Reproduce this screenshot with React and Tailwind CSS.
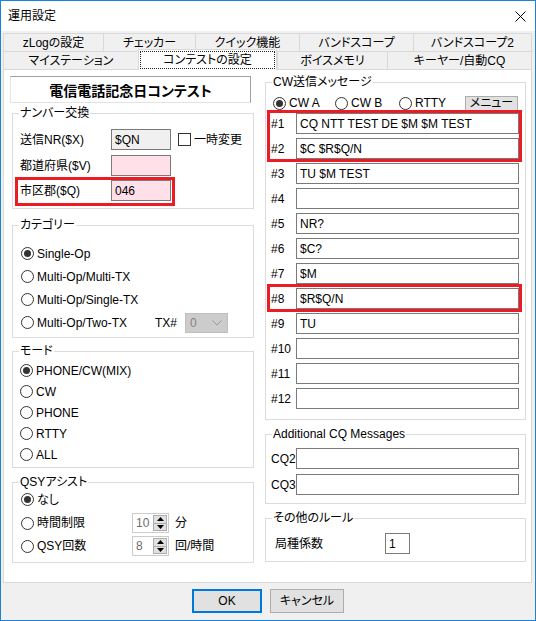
import React from 'react';

const topTabs = [
  { label: 'zLogの設定', w: 'w-[100px]' },
  { label: 'チェッカー', w: 'w-[92px]' },
  { label: 'クイック機能', w: 'w-[104px]' },
  { label: 'バンドスコープ', w: 'w-[114px]' },
  { label: 'バンドスコープ2', w: 'w-[119px]' },
];

const bottomTabs = [
  { label: 'マイステーション', w: 'w-[135px]' },
  { label: 'コンテストの設定', w: 'w-[139px]', active: true },
  { label: 'ボイスメモリ', w: 'w-[110px]' },
  { label: 'キーヤー/自動CQ', w: 'w-[145px]' },
];

const cwMessages = [
  'CQ NTT TEST DE $M $M TEST',
  '$C $R$Q/N',
  'TU $M TEST',
  '',
  'NR?',
  '$C?',
  '$M',
  '$R$Q/N',
  'TU',
  '',
  '',
  '',
];

// red highlight frame drawn over a block of rows
const Highlight = ({ className }) => (
  <div className={`absolute border-[3px] border-[#ec1c24] pointer-events-none ${className}`} />
);

const Radio = ({ checked }) => (
  <span className="w-[13px] h-[13px] shrink-0 rounded-full border border-[#333] bg-white flex items-center justify-center">
    {checked && <span className="w-[7px] h-[7px] rounded-full bg-[#333]" />}
  </span>
);

const Edit = ({ value, className = '', bg = 'bg-white' }) => (
  <div className={`h-[21px] border border-[#7a7a7a] ${bg} flex items-center pl-[3px] whitespace-pre ${className}`}>
    {value}
  </div>
);

const Group = ({ title, className = '', children }) => (
  <fieldset className={`border border-[#dcdcdc] ${className}`}>
    <legend className="ml-[6px] px-[1px] leading-[14px]">{title}</legend>
    {children}
  </fieldset>
);

const Spin = ({ value }) => (
  <div className="w-[37px] h-[20px] border border-[#cccccc] bg-white flex items-center">
    <span className="flex-1 pl-[3px] text-[#6d6d6d]">{value}</span>
    <div className="w-[15px] h-full flex flex-col py-[1px] pr-[1px]">
      <div className="flex-1 bg-[#e1e1e1] border border-[#adadad] flex items-center justify-center">
        <svg width="7" height="4" viewBox="0 0 7 4"><path d="M0 4 L3.5 0 L7 4 Z" fill="#000" /></svg>
      </div>
      <div className="flex-1 bg-[#e1e1e1] border border-[#adadad] border-t-0 flex items-center justify-center">
        <svg width="7" height="4" viewBox="0 0 7 4"><path d="M0 0 L3.5 4 L7 0 Z" fill="#000" /></svg>
      </div>
    </div>
  </div>
);

const MessageRow = ({ n, text }) => (
  <div className="h-[21px] flex items-center pl-[5px]">
    <span className="w-[25px]">#{n}</span>
    <Edit value={text} className="w-[223px]" />
  </div>
);

export default function App() {
  return (
    <div className="w-[536px] h-[621px] bg-[#f0f0f0] border border-[#1883d7] flex flex-col text-[12px] leading-[14px] text-black font-['Liberation_Sans','Noto_Sans_CJK_JP',sans-serif] [font-feature-settings:'palt']">
      {/* Title bar */}
      <div className="h-[30px] bg-white flex items-center justify-between pl-[7px] pr-[9px] shrink-0">
        <span className="text-[12px]">運用設定</span>
        <svg width="11" height="11" viewBox="0 0 11 11">
          <path d="M0.5 0.5 L10.5 10.5 M10.5 0.5 L0.5 10.5" stroke="#000" strokeWidth="1" />
        </svg>
      </div>

      {/* Tabs */}
      <div className="pt-[2px] px-[2px]">
        <div className="flex h-[18px]">
          {topTabs.map((t, i) => (
            <div
              key={t.label}
              className={`${t.w} border-t border-l border-[#d9d9d9] ${i === topTabs.length - 1 ? 'border-r' : ''} flex items-center justify-center`}
            >
              {t.label}
            </div>
          ))}
        </div>
        <div className="flex items-start h-[18px] border-t border-[#d9d9d9]">
          {bottomTabs.map((t, i) =>
            t.active ? (
              <div
                key={t.label}
                className={`${t.w} h-[21px] -mt-[3px] relative z-10 bg-white border-t border-l border-r border-[#d9d9d9] p-[1px]`}
              >
                <div className="h-full border border-dotted border-[#222] flex items-center justify-center">
                  {t.label}
                </div>
              </div>
            ) : (
              <div
                key={t.label}
                className={`${t.w} h-[18px] border-l border-[#d9d9d9] ${i === bottomTabs.length - 1 ? 'border-r' : ''} flex items-center justify-center`}
              >
                {t.label}
              </div>
            )
          )}
        </div>

        {/* Tab page */}
        <div className="w-[529px] h-[514px] bg-white border border-[#d9d9d9] flex pl-[6px]">
          {/* Left column */}
          <div className="w-[244px] pt-[6px] flex flex-col">
            <div className="w-[241px] h-[27px] border-t border-r border-[#a0a0a0] border-l border-b border-l-[#e3e3e3] border-b-[#e3e3e3] flex items-center justify-center text-[14px] font-bold font-['Noto_Sans_CJK_JP',sans-serif]">
              電信電話記念日コンテスト
            </div>

            <Group title="ナンバー交換" className="ml-[2px] mt-[3px] w-[242px] pt-[9px] pb-[7px]">
              <div className="h-[21px] flex items-center pl-[7px]">
                <span className="w-[91px]">送信NR($X)</span>
                <Edit value="$QN" bg="bg-[#f0f0f0]" className="w-[60px]" />
                <span className="ml-[7px] w-[13px] h-[13px] border border-[#333] bg-white" />
                <span className="ml-[3px]">一時変更</span>
              </div>
              <div className="h-[21px] mt-[5px] flex items-center pl-[7px]">
                <span className="w-[91px]">都道府県($V)</span>
                <Edit value="" bg="bg-[#ffe0e8]" className="w-[60px]" />
              </div>
              <div className="relative h-[21px] mt-[4px] flex items-center pl-[7px]">
                <span className="w-[91px]">市区郡($Q)</span>
                <Edit value="046" bg="bg-[#ffe0e8]" className="w-[60px]" />
                <Highlight className="left-[2px] top-[-3px] w-[160px] h-[29px]" />
              </div>
            </Group>

            <Group title="カテゴリー" className="ml-[2px] mt-[9px] w-[242px] pt-[10px] pb-[3px]">
              {['Single-Op', 'Multi-Op/Multi-TX', 'Multi-Op/Single-TX'].map((c, i) => (
                <div key={c} className="h-[23px] flex items-center pl-[8px]">
                  <Radio checked={i === 0} />
                  <span className="ml-[3px]">{c}</span>
                </div>
              ))}
              <div className="h-[23px] flex items-center pl-[8px]">
                <Radio />
                <span className="ml-[3px] w-[118px]">Multi-Op/Two-TX</span>
                <span className="w-[30px]">TX#</span>
                <div className="w-[43px] h-[20px] bg-[#cccccc] border border-[#bfbfbf] flex items-center pl-[4px] text-[#838383]">
                  <span className="flex-1">0</span>
                  <svg width="10" height="6" viewBox="0 0 10 6" className="mr-[5px]">
                    <path d="M0.5 0.5 L5 5 L9.5 0.5" fill="none" stroke="#9a9a9a" strokeWidth="1" />
                  </svg>
                </div>
              </div>
            </Group>

            <Group title="モード" className="ml-[2px] mt-[6px] w-[242px] pt-[2px] pb-[2px]">
              {['PHONE/CW(MIX)', 'CW', 'PHONE', 'RTTY', 'ALL'].map((m, i) => (
                <div key={m} className="h-[21px] flex items-center pl-[7px]">
                  <Radio checked={i === 0} />
                  <span className="ml-[3px]">{m}</span>
                </div>
              ))}
            </Group>

            <Group title="QSYアシスト" className="ml-[2px] mt-[7px] w-[242px] pb-[5px]">
              <div className="h-[21px] flex items-center pl-[8px]">
                <Radio checked />
                <span className="ml-[3px]">なし</span>
              </div>
              <div className="h-[22px] mt-[2px] flex items-center pl-[8px]">
                <Radio />
                <span className="ml-[3px] w-[95px]">時間制限</span>
                <Spin value="10" />
                <span className="ml-[6px]">分</span>
              </div>
              <div className="h-[22px] mt-[1px] flex items-center pl-[8px]">
                <Radio />
                <span className="ml-[3px] w-[95px]">QSY回数</span>
                <Spin value="8" />
                <span className="ml-[6px]">回/時間</span>
              </div>
            </Group>
          </div>

          {/* Right column */}
          <div className="w-[261px] ml-[11px] pt-[5px] flex flex-col">
            <Group title="CW送信メッセージ" className="w-[261px] pt-[4px] pb-[10px]">
              <div className="h-[20px] flex items-center pl-[7px]">
                <Radio checked />
                <span className="ml-[3px] w-[46px]">CW A</span>
                <Radio />
                <span className="ml-[3px] w-[48px]">CW B</span>
                <Radio />
                <span className="ml-[3px] w-[50px]">RTTY</span>
                <div className="w-[53px] h-[15px] bg-[#e1e1e1] border border-[#adadad] flex items-center justify-center">
                  メニュー
                </div>
              </div>
              <div className="flex flex-col gap-[4px]">
                <div className="relative flex flex-col gap-[4px]">
                  <MessageRow n={1} text={cwMessages[0]} />
                  <MessageRow n={2} text={cwMessages[1]} />
                  <Highlight className="left-[1px] top-[-3px] w-[255px] h-[52px]" />
                </div>
                {cwMessages.slice(2, 7).map((m, i) => (
                  <MessageRow key={i + 3} n={i + 3} text={m} />
                ))}
                <div className="relative">
                  <MessageRow n={8} text={cwMessages[7]} />
                  <Highlight className="left-[1px] top-[-4px] w-[255px] h-[28px]" />
                </div>
                {cwMessages.slice(8).map((m, i) => (
                  <MessageRow key={i + 9} n={i + 9} text={m} />
                ))}
              </div>
            </Group>

            <Group title="Additional CQ Messages" className="w-[261px] mt-[7px] pt-[7px] pb-[8px]">
              <div className="flex flex-col gap-[5px]">
                {['CQ2', 'CQ3'].map((c) => (
                  <div key={c} className="h-[21px] flex items-center pl-[5px]">
                    <span className="w-[25px]">{c}</span>
                    <Edit value="" className="w-[223px]" />
                  </div>
                ))}
              </div>
            </Group>

            <Group title="その他のルール" className="w-[261px] mt-[7px] pt-[8px] pb-[7px]">
              <div className="h-[21px] flex items-center pl-[9px]">
                <span className="w-[110px]">局種係数</span>
                <Edit value="1" className="w-[25px]" />
              </div>
            </Group>
          </div>
        </div>
      </div>

      {/* Dialog buttons */}
      <div className="flex justify-center gap-[8px] pt-[6px]">
        <button className="w-[70px] h-[24px] bg-[#e1e1e1] border-2 border-[#0078d7]">OK</button>
        <button className="w-[74px] h-[24px] bg-[#e1e1e1] border border-[#adadad]">キャンセル</button>
      </div>
    </div>
  );
}
